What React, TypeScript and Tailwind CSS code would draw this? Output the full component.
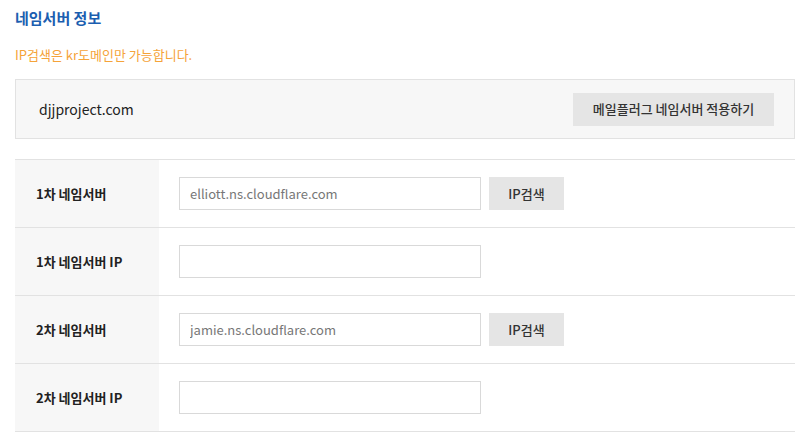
const rows = [
  { label: "1차 네임서버", value: "elliott.ns.cloudflare.com", search: true },
  { label: "1차 네임서버 IP", value: "", search: false },
  { label: "2차 네임서버", value: "jamie.ns.cloudflare.com", search: true },
  { label: "2차 네임서버 IP", value: "", search: false },
];

export default function App() {
  return (
    <div className="min-h-[440px] w-[812px] bg-white pl-[15px] pt-[8px] font-['Noto_Sans_CJK_KR','Noto_Sans',sans-serif] text-[#333333]">
      <h2 className="text-[15px] font-bold leading-[20px] text-[#1b5eb0]">네임서버 정보</h2>
      <p className="mt-[18px] text-[13px] leading-[18px] text-[#f5a339]">IP검색은 kr도메인만 가능합니다.</p>

      <div className="mt-[15px] flex h-[60px] w-[780px] items-center justify-between border border-[#e2e2e2] bg-[#f7f7f7] pl-[23px] pr-[20px]">
        <span className="text-[14px] text-[#222222]">djjproject.com</span>
        <button className="h-[33px] w-[201px] bg-[#e5e5e5] text-[13px] font-medium text-[#333333]">
          메일플러그 네임서버 적용하기
        </button>
      </div>

      <table className="mt-[20px] w-[780px] border-collapse border-t border-[#e2e2e2]">
        <tbody>
          {rows.map((row) => (
            <tr key={row.label} className="h-[68px] border-b border-[#e2e2e2]">
              <th className="w-[144px] bg-[#f7f7f7] pl-[21px] text-left text-[13px] font-bold text-[#222222]">
                {row.label}
              </th>
              <td className="pl-[20px]">
                <div className="flex items-center gap-[8px]">
                  <input
                    readOnly
                    value={row.value}
                    className="h-[33px] w-[302px] border border-[#d9d9d9] bg-white px-[10px] text-[13px] text-[#777777] outline-none"
                  />
                  {row.search ? (
                    <button className="h-[33px] w-[75px] bg-[#e5e5e5] text-[13px] font-medium text-[#333333]">
                      IP검색
                    </button>
                  ) : null}
                </div>
              </td>
            </tr>
          ))}
        </tbody>
      </table>
    </div>
  );
}
